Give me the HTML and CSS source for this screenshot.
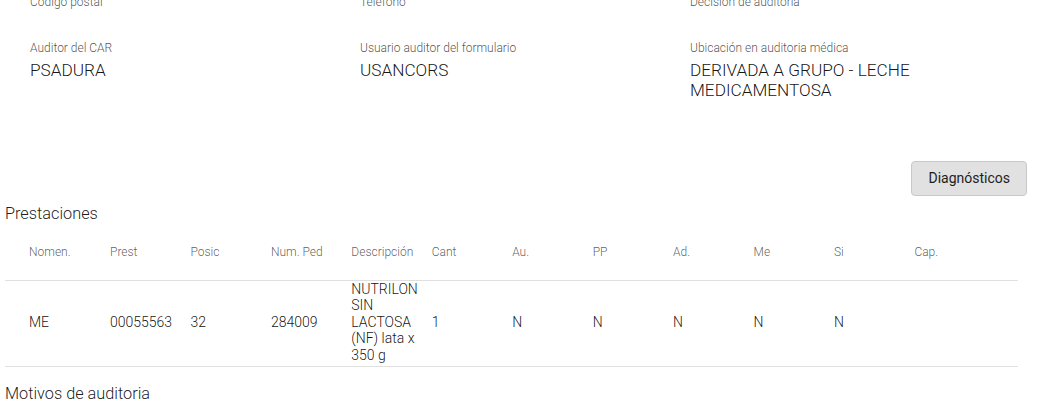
FILE: index.html
```html
<!DOCTYPE html>
<html lang="es">
<head>
<meta charset="utf-8">
<title>Auditoría</title>
<link rel="stylesheet" href="styles.css">
</head>
<body>
<div class="page">
  <div class="fields">
    <div class="field"><div class="label">Código postal</div><div class="value"></div></div>
    <div class="field"><div class="label">Teléfono</div><div class="value"></div></div>
    <div class="field"><div class="label">Decisión de auditoría</div><div class="value"></div></div>
    <div class="field"><div class="label">Auditor del CAR</div><div class="value">PSADURA</div></div>
    <div class="field"><div class="label">Usuario auditor del formulario</div><div class="value">USANCORS</div></div>
    <div class="field"><div class="label">Ubicación en auditoria médica</div><div class="value">DERIVADA A GRUPO - LECHE MEDICAMENTOSA</div></div>
  </div>

  <div class="actions">
    <button class="btn" type="button">Diagnósticos</button>
  </div>

  <div class="section-title">Prestaciones</div>
  <table class="grid">
    <colgroup>
      <col class="c-first"><col class="c"><col class="c"><col class="c"><col class="c"><col class="c">
      <col class="c"><col class="c"><col class="c"><col class="c"><col class="c"><col class="c-last">
    </colgroup>
    <thead>
      <tr>
        <th>Nomen.</th><th>Prest</th><th>Posic</th><th>Num. Ped</th><th>Descripción</th><th>Cant</th>
        <th>Au.</th><th>PP</th><th>Ad.</th><th>Me</th><th>Si</th><th>Cap.</th>
      </tr>
    </thead>
    <tbody>
      <tr>
        <td>ME</td><td>00055563</td><td>32</td><td>284009</td><td>NUTRILON SIN LACTOSA (NF) lata x 350 g</td><td>1</td>
        <td>N</td><td>N</td><td>N</td><td>N</td><td>N</td><td></td>
      </tr>
    </tbody>
  </table>

  <div class="section-title motivos">Motivos de auditoria</div>
</div>
</body>
</html>
```

FILE: styles.css
```css
* { box-sizing: border-box; }

html, body {
  margin: 0;
  padding: 0;
  background: #ffffff;
  overflow: hidden;
}

body {
  font-family: Roboto, "Liberation Sans", Arial, sans-serif;
  color: rgba(0, 0, 0, 0.8);
}

.page {
  padding: 0 15px 0 5px;
}

.fields {
  display: grid;
  grid-template-columns: repeat(3, 330px);
  row-gap: 6px;
  padding-left: 25px;
  margin-top: -6px;
}

.label {
  font-size: 12px;
  line-height: 16px;
  font-weight: 300;
  color: rgba(0, 0, 0, 0.7);
}

.value {
  margin-top: 4px;
  min-height: 20px;
  font-size: 17.2px;
  line-height: 20px;
  font-weight: 300;
  color: rgba(0, 0, 0, 0.92);
  padding-right: 90px;
}

.actions {
  display: flex;
  justify-content: flex-end;
  margin-top: 61px;
}

.btn {
  font-family: Roboto, "Liberation Sans", Arial, sans-serif;
  font-size: 14px;
  font-weight: 400;
  line-height: 33px;
  padding: 0 16px;
  border: 1px solid #c9c9c9;
  border-radius: 4px;
  background: #e1e1e1;
  color: #1e1e1e;
}

.section-title {
  margin-top: 8px;
  font-size: 16.3px;
  line-height: 20px;
  font-weight: 300;
  color: rgba(0, 0, 0, 0.9);
}

.motivos {
  margin-top: 17px;
}

.grid {
  width: 1013px;
  table-layout: fixed;
  border-collapse: collapse;
}

.c-first { width: 105px; }
.c { width: 80.45px; }
.c-last { width: 103.5px; }

.grid th,
.grid td {
  padding: 0;
  text-align: left;
  vertical-align: middle;
  border-bottom: 1px solid #e0e0e0;
}

.grid th:first-child,
.grid td:first-child {
  padding-left: 24px;
}

.grid th:last-child,
.grid td:last-child {
  padding-right: 24px;
}

.grid th {
  height: 56px;
  font-size: 12px;
  font-weight: 300;
  color: rgba(0, 0, 0, 0.65);
}

.grid td {
  font-size: 14px;
  line-height: 16.5px;
  font-weight: 300;
  padding-top: 0;
  padding-bottom: 3px;
  color: rgba(0, 0, 0, 0.92);
}
```
